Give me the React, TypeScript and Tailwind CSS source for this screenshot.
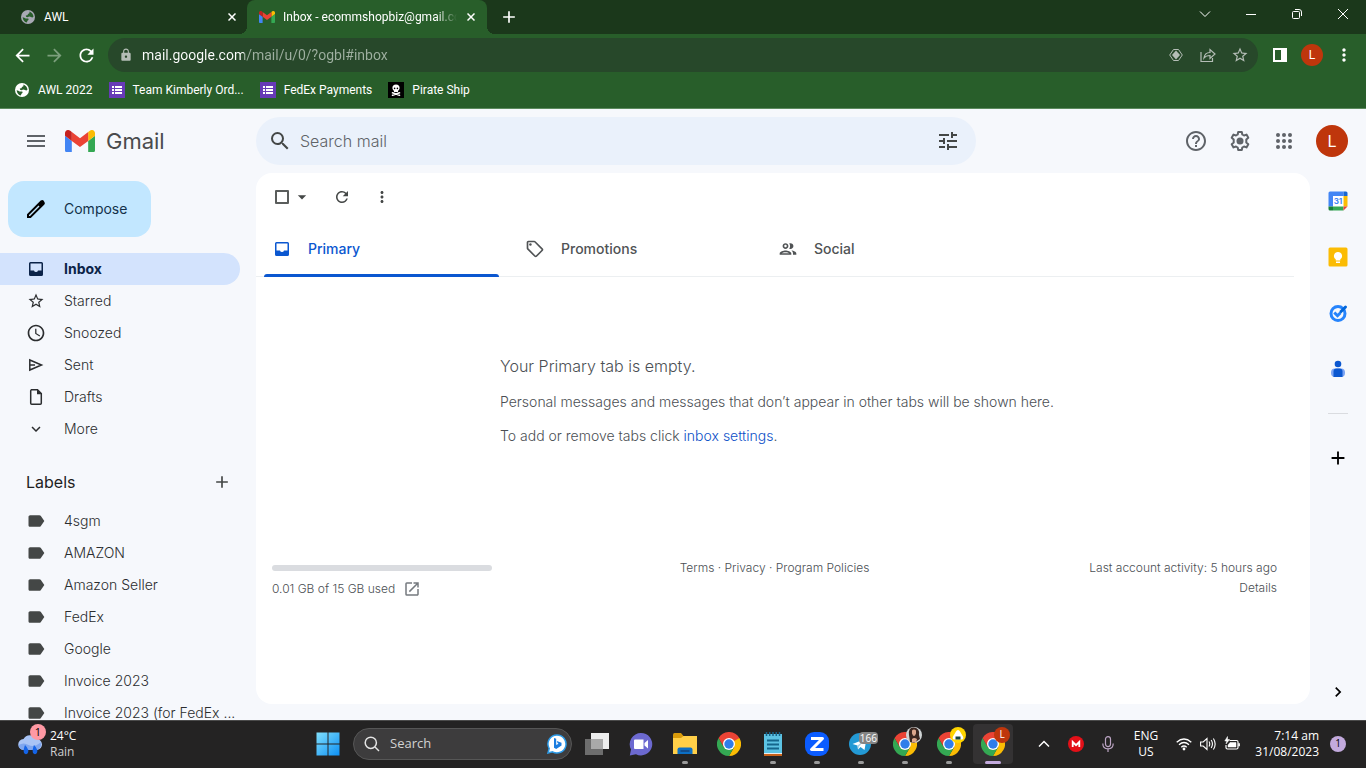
import type { ReactNode } from "react";
import {
  MdAccessTime,
  MdAdd,
  MdArrowBack,
  MdArrowDropDown,
  MdArrowForward,
  MdChevronRight,
  MdExpandMore,
  MdHelpOutline,
  MdLabel,
  MdLock,
  MdMenu,
  MdMoreVert,
  MdOpenInNew,
  MdOutlineGroup,
  MdOutlineSell,
  MdRefresh,
  MdSearch,
  MdStarBorder,
  MdTune,
} from "react-icons/md";

const InboxIcon = () => (
  <svg viewBox="0 0 20 20" fill="currentColor" fillRule="evenodd" className="size-5" aria-hidden="true">
    <path d="M4.500 3h11Q17 3 17 4.500v11q0 1.500-1.500 1.500h-11Q3 17 3 15.500v-11Q3 3 4.500 3M4.500 4.500v7H8q.4 1.500 2 1.500t2-1.500h3.500v-7z" />
  </svg>
);

const SendIcon = () => (
  <svg viewBox="0 0 20 20" fill="none" stroke="currentColor" strokeWidth="1.500" className="size-5" aria-hidden="true">
    <path d="M3.800 5v10L15.500 10zM4 10h5" />
  </svg>
);

const DraftIcon = () => (
  <svg viewBox="0 0 20 20" fill="none" stroke="currentColor" strokeWidth="1.500" className="size-5" aria-hidden="true">
    <path d="M5 2.800h6.500L15.300 6.600v9.600q0 1-1 1H5.700q-1 0-1-1V3.800q0-1 1-1" />
    <path fill="currentColor" stroke="none" d="M11 2.500 15.700 7.200H11z" />
  </svg>
);

const GlobeIcon = ({ className }: { className?: string }) => (
  <svg viewBox="0 0 16 16" className={className} aria-hidden="true">
    <circle cx="8" cy="8" r="7" fill="currentColor" />
    <path
      fill="#285e2a"
      d="M9.500 2.500Q13 4 13.500 7.500q-1 1.500-2.500.5-1.500-1-3.500.2Q5.500 8 5.800 6.500q2.200 0 2.200-1.500 2-.5 1.500-2.500M2.600 8.200q2 .3 3 1.300h2.700q1 1.500-.8 2.200-.5.8-.7 1.900Q3.200 12.500 2.600 8.200"
    />
  </svg>
);

const folders = [
  { name: "Inbox", icon: <InboxIcon />, active: true },
  { name: "Starred", icon: <MdStarBorder size={18} /> },
  { name: "Snoozed", icon: <MdAccessTime size={20} /> },
  { name: "Sent", icon: <SendIcon /> },
  { name: "Drafts", icon: <DraftIcon /> },
  { name: "More", icon: <MdExpandMore size={18} /> },
];

const labels = [
  "4sgm",
  "AMAZON",
  "Amazon Seller",
  "FedEx",
  "Google",
  "Invoice 2023",
  "Invoice 2023 (for FedEx ...",
];

const tabs = [
  { name: "Primary", icon: <InboxIcon />, active: true },
  { name: "Promotions", icon: <MdOutlineSell size={20} /> },
  { name: "Social", icon: <MdOutlineGroup size={20} /> },
];

const GmailLogo = ({ className }: { className: string }) => (
  <svg viewBox="52 42 88 66" className={className} aria-hidden="true">
    <path fill="#4285f4" d="M58 108h14V74L52 59v43c0 3.3 2.7 6 6 6" />
    <path fill="#34a853" d="M120 108h14c3.3 0 6-2.7 6-6V59l-20 15" />
    <path fill="#fbbc04" d="M120 48v26l20-15v-8c0-7.4-8.5-11.7-14.4-7.2" />
    <path fill="#ea4335" d="M72 74V48l24 18 24-18v26L96 92" />
    <path fill="#c5221f" d="M52 51v8l20 15V48l-5.6-4.2C60.5 39.3 52 43.6 52 51" />
  </svg>
);

const ChromeLogo = () => (
  <svg viewBox="0 0 48 48" className="size-6" aria-hidden="true">
    <path fill="#ea4335" d="M24 24 3.2 12A24 24 0 0 1 44.8 12z" />
    <path fill="#fbbc04" d="M44.8 12A24 24 0 0 1 24 48l10.4-18L24 12z" />
    <path fill="#34a853" d="M24 48A24 24 0 0 1 3.2 12l10.4 18L24 36l10.4-6z" />
    <path fill="#ea4335" d="M24 12h20.8L34.4 18 24 24 13.6 30 3.2 12z" />
    <circle cx="24" cy="24" r="12" fill="#fff" />
    <circle cx="24" cy="24" r="9.4" fill="#2f7de9" />
  </svg>
);

const FormIcon = () => (
  <svg viewBox="0 0 16 16" className="size-4" aria-hidden="true">
    <path fill="#673ab7" d="M0 0h16v16H0z" />
    <path fill="#fff" d="M3 4h2v2H3zM6 4h7v2H6zM3 7h2v2H3zM6 7h7v2H6zM3 10h2v2H3zM6 10h7v2H6z" />
  </svg>
);

const SkullIcon = () => (
  <svg viewBox="0 0 16 16" className="size-4" aria-hidden="true">
    <path d="M0 0h16v16H0z" />
    <path fill="#fff" d="M8 2.500a3.600 3.600 0 0 0-3.600 3.600c0 1.200.6 2.200 1.600 2.800V10h4V8.900c1-.6 1.600-1.600 1.600-2.800A3.600 3.600 0 0 0 8 2.500" />
    <path stroke="#fff" strokeWidth="1.600" strokeLinecap="round" d="m4.500 10.800 7 2.400M11.500 10.800l-7 2.400" />
    <circle cx="6.600" cy="6.400" r=".8" />
    <circle cx="9.400" cy="6.400" r=".8" />
  </svg>
);

const CloseIcon = () => (
  <svg viewBox="0 0 8 8" className="size-2" aria-hidden="true">
    <path stroke="#fff" strokeWidth="1.500" d="m.5.5 7 7M7.500.5l-7 7" />
  </svg>
);

const bookmarks = [
  { name: "AWL 2022", icon: <GlobeIcon className="size-4" /> },
  { name: "Team Kimberly Ord...", icon: <FormIcon /> },
  { name: "FedEx Payments", icon: <FormIcon /> },
  { name: "Pirate Ship", icon: <SkullIcon /> },
];

const windowButtons = [
  { name: "Search tabs", path: "m1 3.500 5 5 5-5" },
  { name: "Minimize", path: "M1 6.500h10" },
  { name: "Restore", path: "M2.500 3.500h5q1 0 1 1v5q0 1-1 1h-5q-1 0-1-1v-5q0-1 1-1M4 1.500h4q2.500 0 2.500 2.500v4" },
  { name: "Close", path: "m1 1 10 10M11 1 1 11" },
];

const BrowserChrome = () => (
  <header className="shrink-0 border-b border-[#5c8a5e] bg-[#285e2a] text-xs text-white">
    <div className="flex h-[34px] bg-[#1b381b]">
      <div className="flex w-[247px] items-center gap-2 pr-[9px] pl-5">
        <GlobeIcon className="size-4 text-[#a8a9b4]" />
        <span className="flex-1">AWL</span>
        <button aria-label="Close AWL" className="p-0.5">
          <CloseIcon />
        </button>
      </div>
      <div className="relative flex w-60 items-center gap-2 rounded-t-lg bg-[#285e2a] pr-[10px] pl-3 before:absolute before:bottom-0 before:-left-2 before:size-2 before:bg-[radial-gradient(circle_at_0_0,transparent_8px,#285e2a_8px)] after:absolute after:-right-2 after:bottom-0 after:size-2 after:bg-[radial-gradient(circle_at_100%_0,transparent_8px,#285e2a_8px)]">
        <GmailLogo className="w-4" />
        <span className="flex-1 overflow-hidden whitespace-nowrap [mask-image:linear-gradient(90deg,#000_88%,transparent)]">
          Inbox - ecommshopbiz@gmail.com
        </span>
        <button aria-label="Close Inbox" className="p-0.5">
          <CloseIcon />
        </button>
      </div>
      <button aria-label="New tab" className="px-3">
        <MdAdd size={20} />
      </button>
      <div className="ml-auto flex">
        {windowButtons.map((button) => (
          <button key={button.name} aria-label={button.name} className="flex w-[46px] justify-center pt-2">
            <svg viewBox="0 0 12 12" fill="none" stroke="currentColor" className="size-3">
              <path d={button.path} />
            </svg>
          </button>
        ))}
      </div>
    </div>

    <div className="flex h-[42px] items-center gap-1.5 px-1.5">
      <div className="flex">
        <button aria-label="Back" className="flex w-8 justify-center">
          <MdArrowBack size={21} />
        </button>
        <button aria-label="Forward" className="flex w-8 justify-center text-[#7c9f7d]">
          <MdArrowForward size={21} />
        </button>
        <button aria-label="Reload" className="flex w-8 justify-center">
          <MdRefresh size={21} />
        </button>
      </div>
      <div className="flex h-[34px] flex-1 items-center rounded-full bg-[#27482a] pr-0.5 pl-[11px] text-[#b4bdb6]">
        <MdLock size={14} />
        <input
          aria-label="Address"
          readOnly
          value="mail.google.com/mail/u/0/?ogbl#inbox"
          className="ml-[9px] flex-1 bg-[linear-gradient(90deg,#fff_102px,#9fb0a1_102px)] bg-clip-text text-sm text-transparent outline-none"
        />
        <button aria-label="Preview" className="flex w-8 justify-center">
          <svg viewBox="0 0 14 14" className="size-3.5">
            <path fill="none" stroke="currentColor" d="M4.500 1.500.700 7l3.800 5.500h5L13.300 7 9.500 1.500z" />
            <path fill="currentColor" d="M7 2.500 11 7l-4 4.500L3 7z" />
          </svg>
        </button>
        <button aria-label="Share" className="flex w-8 justify-center">
          <svg viewBox="0 0 16 16" fill="none" stroke="currentColor" strokeWidth="1.200" className="size-4">
            <path d="M1 5v9.500h11.500V11" />
            <path d="M4 11c.5-4 3-5.500 6-5.500V2.500L15 7l-5 4.500v-3C7.500 8.500 5.500 9 4 11z" />
          </svg>
        </button>
        <button aria-label="Bookmark" className="flex w-8 justify-center">
          <MdStarBorder size={18} />
        </button>
      </div>
      <div className="flex items-center">
        <button aria-label="Side panel" className="flex w-8 justify-center">
          <span className="size-3.5 border-2 border-r-[6px] border-white" />
        </button>
        <button aria-label="Profile" className="flex w-8 justify-center">
          <span className="flex size-[22px] items-center justify-center rounded-full bg-[#bf360c]">L</span>
        </button>
        <button aria-label="Menu" className="flex w-8 justify-center">
          <MdMoreVert size={20} />
        </button>
      </div>
    </div>

    <nav className="flex h-8 items-center gap-4 px-3.5 pb-1">
      {bookmarks.map((bookmark) => (
        <a key={bookmark.name} href="#" className="flex items-center gap-2">
          {bookmark.icon}
          {bookmark.name}
        </a>
      ))}
    </nav>
  </header>
);

const GmailHeader = () => (
  <div className="flex h-16 shrink-0 items-center text-[#5f6368]">
    <div className="flex w-64 items-center pl-6">
      <button aria-label="Main menu">
        <MdMenu size={24} />
      </button>
      <a href="#" className="ml-[17px] flex items-center gap-[11px] text-[22px] text-[#4a4b4d]">
        <GmailLogo className="w-[30px]" />
        Gmail
      </a>
    </div>
    <form className="flex h-12 w-[720px] items-center gap-2 rounded-full bg-[#eaf1fb] px-3 text-[#444746]">
      <button type="button" aria-label="Search">
        <MdSearch size={24} />
      </button>
      <input
        aria-label="Search mail"
        placeholder="Search mail"
        className="flex-1 bg-transparent text-base font-light outline-none placeholder:text-[#5f6368]"
      />
      <button type="button" aria-label="Search options" className="px-1">
        <MdTune size={24} />
      </button>
    </form>
    <div className="ml-auto flex items-center gap-5 pr-[18px]">
      <button aria-label="Support">
        <MdHelpOutline size={24} />
      </button>
      <button aria-label="Settings">
        <svg viewBox="0 0 24 24" fill="none" stroke="currentColor" strokeWidth="2" className="size-6">
          <path
            strokeLinejoin="round"
            d="M10.200 3h3.600l.5 2.500 1.700 1 2.500-.9 1.800 3.100-2 1.700v3.200l2 1.700-1.800 3.100-2.500-.9-1.700 1-.5 2.500h-3.600l-.5-2.500-1.700-1-2.500.9-1.800-3.100 2-1.700v-3.200l-2-1.700 1.800-3.100 2.500.9 1.700-1z"
          />
          <circle cx="12" cy="12" r="3.500" fill="currentColor" stroke="none" />
        </svg>
      </button>
      <button aria-label="Google apps">
        <svg viewBox="0 0 24 24" fill="currentColor" className="size-6">
          {[6, 12, 18].map((y) => [6, 12, 18].map((x) => <circle key={`${x}-${y}`} cx={x} cy={y} r="2" />))}
        </svg>
      </button>
      <button
        aria-label="Account"
        className="flex size-8 items-center justify-center rounded-full bg-[#bf360c] text-base text-white"
      >
        L
      </button>
    </div>
  </div>
);

const Sidebar = () => (
  <aside className="w-64 shrink-0 overflow-hidden pt-2 text-sm font-light text-[#2b2d2f]">
    <button className="ml-2 flex h-14 items-center gap-4 rounded-2xl bg-[#c2e7ff] pr-6 pl-4 font-normal text-[#14324b]">
      <svg viewBox="0 0 24 24" className="size-6" aria-hidden="true">
        <path d="M20.400 4.900a2.600 2.600 0 0 0-3.700-1.300L3 17.200V21h3.800L20.400 7.400a2 2 0 0 0 0-2.500M6 19H5v-1l9.500-9.500 1 1z" />
      </svg>
      Compose
    </button>
    <nav className="mt-4">
      {folders.map((folder) => (
        <a
          key={folder.name}
          href="#"
          className={
            folder.active
              ? "mr-4 flex h-8 items-center gap-[18px] rounded-r-full bg-[#d3e3fd] pl-[26px] font-bold text-[#0b2348]"
              : "mr-4 flex h-8 items-center gap-[18px] pl-[26px]"
          }
        >
          <span className="flex w-5 justify-center">{folder.icon}</span>
          {folder.name}
        </a>
      ))}
    </nav>
    <div className="mt-[15px] mb-px flex h-11 items-center justify-between pr-6 pl-[26px]">
      <h2 className="text-base font-normal text-[#1f1f1f]">Labels</h2>
      <button aria-label="Create new label" className="text-[#444746]">
        <MdAdd size={20} />
      </button>
    </div>
    <nav>
      {labels.map((label) => (
        <a key={label} href="#" className="flex h-8 items-center gap-[18px] pl-[26px] whitespace-nowrap">
          <MdLabel size={20} className="shrink-0 text-[#444746]" />
          {label}
        </a>
      ))}
    </nav>
  </aside>
);

const MailPanel = () => (
  <main className="mb-4 min-w-0 flex-1 rounded-2xl bg-white text-sm text-[#5f6368]">
    <div className="flex h-12 items-center pl-[19px] text-[#444746]">
      <input
        type="checkbox"
        aria-label="Select all"
        className="size-3.5 appearance-none rounded-[1px] border-2 border-[#5a5d5c]"
      />
      <button aria-label="Select" className="ml-[3px]">
        <MdArrowDropDown size={20} />
      </button>
      <button aria-label="Refresh" className="ml-[21px]">
        <MdRefresh size={18} />
      </button>
      <button aria-label="More" className="ml-[22px]">
        <MdMoreVert size={18} />
      </button>
    </div>

    <div role="tablist" className="mr-4 flex h-14 border-b border-[#eceff1] pl-2">
      {tabs.map((tab) => (
        <button
          key={tab.name}
          role="tab"
          aria-selected={!!tab.active}
          className={
            tab.active
              ? "relative flex w-[253px] items-center gap-4 pl-2 font-medium text-[#0b57d0]"
              : "flex w-[253px] items-center gap-4 pl-2 font-medium text-[#505355]"
          }
        >
          <span className="flex w-5 justify-center">{tab.icon}</span>
          {tab.name}
          {tab.active && (
            <span className="absolute right-[18px] -bottom-px left-0 h-[3px] rounded-t-full bg-[#0b57d0]" />
          )}
        </button>
      ))}
    </div>

    <div className="mx-auto flex w-[566px] flex-col gap-3.5 pt-[77px] font-light text-[#4b4f54] whitespace-nowrap">
      <p className="text-base">Your Primary tab is empty.</p>
      <p>Personal messages and messages that don’t appear in other tabs will be shown here.</p>
      <p>
        To add or remove tabs click{" "}
        <a href="#" className="text-[#0b50c8]">
          inbox settings
        </a>
        .
      </p>
    </div>

    <footer className="mt-28 grid grid-cols-3 pr-[33px] pl-4 text-xs leading-5 font-light text-[#4b4f54]">
      <div>
        <div className="mt-[7px] mb-2 h-1.5 w-[220px] rounded-full bg-[#dadce0]" />
        <a href="#" className="flex items-center gap-2">
          0.01 GB of 15 GB used
          <MdOpenInNew size={18} className="text-[#757a7f]" />
        </a>
      </div>
      <div className="text-center">
        <a href="#">Terms</a> · <a href="#">Privacy</a> · <a href="#">Program Policies</a>
      </div>
      <div className="text-right">
        <div>Last account activity: 5 hours ago</div>
        <a href="#">Details</a>
      </div>
    </footer>
  </main>
);

const SidePanel = () => (
  <aside className="flex w-14 shrink-0 flex-col items-center pt-[18px] pb-[18px] text-black">
    <div className="flex flex-col gap-9">
      <button aria-label="Calendar">
        <svg viewBox="0 0 20 20" className="size-5">
          <path fill="#fff" d="M4 4h12v12H4z" />
          <path fill="#4285f4" d="M2 .5h13.500V5H5v10.500H.5V2Q.5.500 2 .5" />
          <path fill="#1967d2" d="M15.500.5H18q1.500 0 1.500 1.500v3h-4z" />
          <path fill="#fbbc04" d="M15.500 5h4v10.500h-4z" />
          <path fill="#34a853" d="M5 15.500h10.500v4H5z" />
          <path fill="#188038" d="M.5 15.500H5v4H2Q.5 19.500.5 18z" />
          <path fill="#ea4335" d="M15.500 15.500h4l-4 4z" />
          <text x="10" y="13" textAnchor="middle" fontSize="8" fontWeight="700" fill="#4285f4">
            31
          </text>
        </svg>
      </button>
      <button aria-label="Keep">
        <svg viewBox="0 0 20 20" className="size-5">
          <rect x=".5" y=".5" width="19" height="19" rx="1.500" fill="#fbbc04" />
          <path fill="#fff" d="M10 5a4 4 0 0 0-2.300 7.300V13.500h4.600v-1.200A4 4 0 0 0 10 5M8 14.500h4V16H8z" />
        </svg>
      </button>
      <button aria-label="Tasks">
        <svg viewBox="0 0 20 20" fill="none" className="size-5">
          <circle cx="10" cy="10.500" r="7" stroke="#2684fc" strokeWidth="3" />
          <path stroke="#2684fc" strokeWidth="3" d="m6.300 9.500 3.200 3.200 3-3" />
          <path stroke="#0066da" strokeWidth="3" strokeLinecap="round" d="m13 8.500 4.500-4.500" />
        </svg>
      </button>
      <button aria-label="Contacts">
        <svg viewBox="0 0 20 20" className="size-5">
          <rect x="3" y="9.500" width="14" height="8.500" rx="4" fill="#7ba4f4" />
          <circle cx="10" cy="5" r="3.300" fill="#0b57d0" />
          <path fill="#0b57d0" d="M8.500 9.500h3q3 0 3 3V18h-9v-5.500q0-3 3-3" />
        </svg>
      </button>
    </div>
    <div className="mt-[34px] h-px w-5 bg-[#dadce0]" />
    <button aria-label="Get add-ons" className="mt-[33px]">
      <MdAdd size={22} />
    </button>
    <button aria-label="Hide side panel" className="mt-auto">
      <MdChevronRight size={20} />
    </button>
  </aside>
);

const TaskbarButton = ({
  name,
  running,
  active,
  children,
}: {
  name: string;
  running?: boolean;
  active?: boolean;
  children: ReactNode;
}) => (
  <button
    aria-label={name}
    className={
      active
        ? "relative mx-0.5 flex h-10 w-10 items-center justify-center rounded-sm bg-[#343233]"
        : "relative mx-0.5 flex h-10 w-10 items-center justify-center"
    }
  >
    {children}
    {running && <span className="absolute bottom-0 h-[3px] w-1.5 rounded-full bg-[#9a9a9a]" />}
    {active && <span className="absolute bottom-0 h-[3px] w-4 rounded-full bg-[#c3aadd]" />}
  </button>
);

const Taskbar = () => (
  <footer className="flex h-12 shrink-0 items-center border-t border-[#4b4b4b] bg-[#242323] pb-0.5 font-['Open_Sans',sans-serif] text-xs text-white">
    <button className="flex w-[306px] items-center gap-2 pl-[18px] text-left leading-4">
      <span className="relative">
        <svg viewBox="0 0 24 24" className="size-6" aria-hidden="true">
          <path fill="#a9c4f5" d="M6 18a5.500 5.500 0 0 1-.5-11A7 7 0 0 1 18 7a5.500 5.500 0 0 1 1 11z" />
          <path fill="#7fa6ee" d="M6 18a5.500 5.500 0 0 1-5.400-5q5-3 10 0t12-2.500A5.500 5.500 0 0 1 19 18z" />
          <path fill="#1464e8" d="M7 13q5 5 2.500 8.500-2 1.500-3.500-.5Q5 18 7 13M16 13q5 5 2.500 8.500-2 1.500-3.500-.5-1-3 1-8" />
        </svg>
        <span className="absolute -top-2 -right-1 flex size-4 items-center justify-center rounded-full bg-[#ff99a4] text-[11px] text-black">
          1
        </span>
      </span>
      <span>
        24°C
        <br />
        <span className="text-[#d0d0d0]">Rain</span>
      </span>
    </button>

    <TaskbarButton name="Start">
      <svg viewBox="0 0 24 24" className="size-6">
        <defs>
          <linearGradient id="start" x1="0" y1="0" x2="24" y2="24" gradientUnits="userSpaceOnUse">
            <stop stopColor="#83e1fc" />
            <stop offset="1" stopColor="#0a8ef5" />
          </linearGradient>
        </defs>
        <path fill="url(#start)" d="M.5.500h11v11H.5zM12.500.500h11v11h-11zM.5 12.500h11v11H.5zM12.500 12.500h11v11h-11z" />
      </svg>
    </TaskbarButton>
    <label className="mx-[3px] flex h-8 w-[219px] items-center rounded-full border border-[#565656] bg-[#3d3c3d] pr-1 pl-2.5">
      <svg viewBox="0 0 16 16" fill="none" stroke="#e4e4e4" strokeWidth="1.500" className="size-4 shrink-0">
        <circle cx="6.800" cy="6.800" r="5.600" />
        <path d="m11 11 4 4" />
      </svg>
      <input
        aria-label="Search"
        placeholder="Search"
        className="ml-2.5 w-0 flex-1 bg-transparent text-[13px] outline-none placeholder:text-[#d2d2d2]"
      />
      <svg viewBox="0 0 20 20" className="size-5 shrink-0">
        <path fill="#fff" stroke="#2c9be8" strokeWidth="1.500" d="M10 1a9 9 0 1 1-4.500 16.800L1 19l1.200-4.500A9 9 0 0 1 10 1" />
        <path fill="#1b7de0" d="m7 4 2.200.8V11L11.500 9.800 10.500 9 9.800 7 14.500 8.700v2.800L9.200 15 7 13.700z" />
      </svg>
    </label>
    <TaskbarButton name="Task view">
      <svg viewBox="0 0 24 24" className="size-6">
        <path fill="#ededed" d="M6 1h18v16H6z" />
        <path fill="#6d6d6d" d="M0 7h18v16H0z" />
        <path fill="#a9a9a9" d="M6 7h12v10H6z" />
      </svg>
    </TaskbarButton>
    <TaskbarButton name="Chat">
      <svg viewBox="0 0 24 24" className="size-6">
        <path fill="#6c69d0" d="M12 1a11.200 11.200 0 1 1-5 21.200L.8 23.500 2 17.500A11.200 11.200 0 0 1 12 1" />
        <path fill="#fff" d="M6 7.500h8.500v9.500H6q-1 0-1-1v-7.500q0-1 1-1M15.500 11 19 8v8.500l-3.500-3z" />
      </svg>
    </TaskbarButton>
    <TaskbarButton name="File Explorer" running>
      <svg viewBox="0 0 24 24" className="size-6">
        <path fill="#d99b0b" d="M0 3q0-2 1.500-2H8l2.500 3H22v4H0z" />
        <path fill="#ffcf48" d="M0 6h8l2.500-2H24v18H0z" />
        <path fill="#0c6fc4" d="M4.500 22v-4.500q0-2 2-2h11q2 0 2 2V22z" />
        <path fill="#124d8c" d="M7.500 18h9v2h-9z" />
      </svg>
    </TaskbarButton>
    <TaskbarButton name="Google Chrome">
      <ChromeLogo />
    </TaskbarButton>
    <TaskbarButton name="Notepad" running>
      <svg viewBox="0 0 24 24" className="size-6">
        <path fill="#c8621b" d="M3 20h18v4H3z" />
        <path fill="#e9eef0" d="M3 18h18v4H3z" />
        <path fill="#5cc3e4" d="M3 2h18v19H3z" />
        <path stroke="#14668c" strokeWidth="1.800" d="M6 8.500h12M6 12.500h12M6 16.500h12" />
        <path stroke="#17648a" strokeWidth="1.500" d="M5.500 0v4M8.700 0v4M12 0v4M15.300 0v4M18.500 0v4" />
      </svg>
    </TaskbarButton>
    <TaskbarButton name="Zalo" running>
      <svg viewBox="0 0 24 24" className="size-6">
        <rect width="24" height="24" rx="9" fill="#0b5cff" />
        <path fill="none" stroke="#fff" strokeWidth="3" strokeLinejoin="round" d="M6 6.500h11.500L6.500 17.500h12" />
      </svg>
    </TaskbarButton>
    <TaskbarButton name="Telegram" running>
      <svg viewBox="0 0 24 24" className="size-6">
        <circle cx="11" cy="12" r="11" fill="#2399d4" />
        <path fill="#fff" d="M3.500 12 17.500 6.500 15.500 18l-4-3-2.500 2.500-.5-4z" />
        <path fill="#a9cfe4" d="m8.500 13.500 6-4.500-4.500 5.500-1 3z" />
      </svg>
      <span className="absolute top-2 right-[3px] rounded-sm bg-[#858585] px-px text-[10px] leading-3">166</span>
    </TaskbarButton>
    <TaskbarButton name="Chrome profile 1" running>
      <ChromeLogo />
      <svg viewBox="0 0 16 16" className="absolute top-[3px] right-[3px] size-4">
        <circle cx="8" cy="8" r="8" fill="#cfd3d4" />
        <path fill="#3b2720" d="M3 8q-1-8 5-7.500T13 8l1 4-6 4-4-1z" />
        <path fill="#dca78c" d="M6 3.500q2-2 4 0v3Q9 9 8 9T6 6.500zM6 12q2-2 5 0l-1 3.500H6z" />
      </svg>
    </TaskbarButton>
    <TaskbarButton name="Chrome profile 2" running>
      <ChromeLogo />
      <svg viewBox="0 0 16 16" className="absolute top-[3px] right-[3px] size-4">
        <circle cx="8" cy="8" r="8" fill="#ffd500" />
        <path fill="#fff" d="M8 3q1.200 0 2 1.500l3 5q1 2.500-1 3H4q-2-.5-1-3l3-5Q6.800 3 8 3" />
        <path fill="#15443f" d="M5.500 9.500h5v3h-5z" />
      </svg>
    </TaskbarButton>
    <TaskbarButton name="Chrome profile L" active>
      <ChromeLogo />
      <span className="absolute top-[3px] right-[3px] flex size-4 items-center justify-center rounded-full bg-[#bf360c] text-[10px]">
        L
      </span>
    </TaskbarButton>

    <div className="ml-auto flex items-center pr-5">
      <button aria-label="Show hidden icons" className="flex w-8 justify-center">
        <svg viewBox="0 0 12 12" fill="none" stroke="currentColor" strokeWidth="1.500" className="size-3">
          <path d="m1 8.500 5-5 5 5" />
        </svg>
      </button>
      <button aria-label="Mega" className="flex w-8 justify-center">
        <svg viewBox="0 0 16 16" className="size-4">
          <circle cx="8" cy="8" r="8" fill="#e31018" />
          <path fill="none" stroke="#fff" strokeWidth="1.800" d="M4.700 11V6L8 9.200 11.300 6v5" />
        </svg>
      </button>
      <button aria-label="Microphone" className="flex w-8 justify-center">
        <svg viewBox="0 0 16 16" fill="none" stroke="#bca5c4" strokeWidth="1.200" className="size-4">
          <rect x="5.500" y=".6" width="5" height="10" rx="2.500" />
          <path d="M2.800 7.500q0 5.300 5.200 5.300t5.200-5.300M8 12.800V16" />
        </svg>
      </button>
      <button className="w-11 text-center leading-4">
        ENG
        <br />
        US
      </button>
      <button aria-label="Network, volume and battery" className="ml-1 flex gap-2 pl-1">
        <svg viewBox="0 0 16 16" fill="none" stroke="currentColor" strokeWidth="1.300" className="size-4">
          <path d="M.7 6.300q7.300-6.600 14.600 0M3 8.800q5-4.500 10 0M5.300 11.200q2.700-2.400 5.400 0" />
          <circle cx="8" cy="13" r="1.400" fill="currentColor" stroke="none" />
        </svg>
        <svg viewBox="0 0 16 16" fill="none" stroke="currentColor" strokeWidth="1.100" className="size-4">
          <path d="M.6 6h2.600l3.800-3.500v11L3.200 10H.6zM9 5.500q1.500 2.500 0 5M11.200 4q2.500 4 0 8M13.400 2.500q3.500 5.500 0 11" />
        </svg>
        <svg viewBox="0 0 16 16" fill="none" stroke="currentColor" strokeWidth="1.200" className="size-4">
          <path d="M5.500 4.500h7q1.500 0 1.500 1.500v5.500q0 1.500-1.500 1.500h-9Q2 13 2 11.500V9M15.300 7.300v3" />
          <path fill="currentColor" d="M6 6.500h6v4.500H4V9zM3.500.5.8 5h2L2 8l3.500-4.500h-2z" strokeWidth=".5" />
        </svg>
      </button>
      <button className="w-[79px] text-right leading-4 whitespace-nowrap">
        7:14 am
        <br />
        31/08/2023
      </button>
      <button
        aria-label="Notifications"
        className="ml-[11px] flex size-4 items-center justify-center rounded-full bg-[#c3aadd] text-[10px] text-black"
      >
        1
      </button>
    </div>
  </footer>
);

const App = () => {
  return (
    <div className="flex h-screen flex-col overflow-hidden bg-[#f6f8fc] font-['Roboto',sans-serif]">
      <BrowserChrome />
      <div className="flex min-h-0 flex-1 flex-col font-['Inter',sans-serif]">
        <GmailHeader />
        <div className="flex min-h-0 flex-1">
          <Sidebar />
          <MailPanel />
          <SidePanel />
        </div>
      </div>
      <Taskbar />
    </div>
  );
};

export default App;
